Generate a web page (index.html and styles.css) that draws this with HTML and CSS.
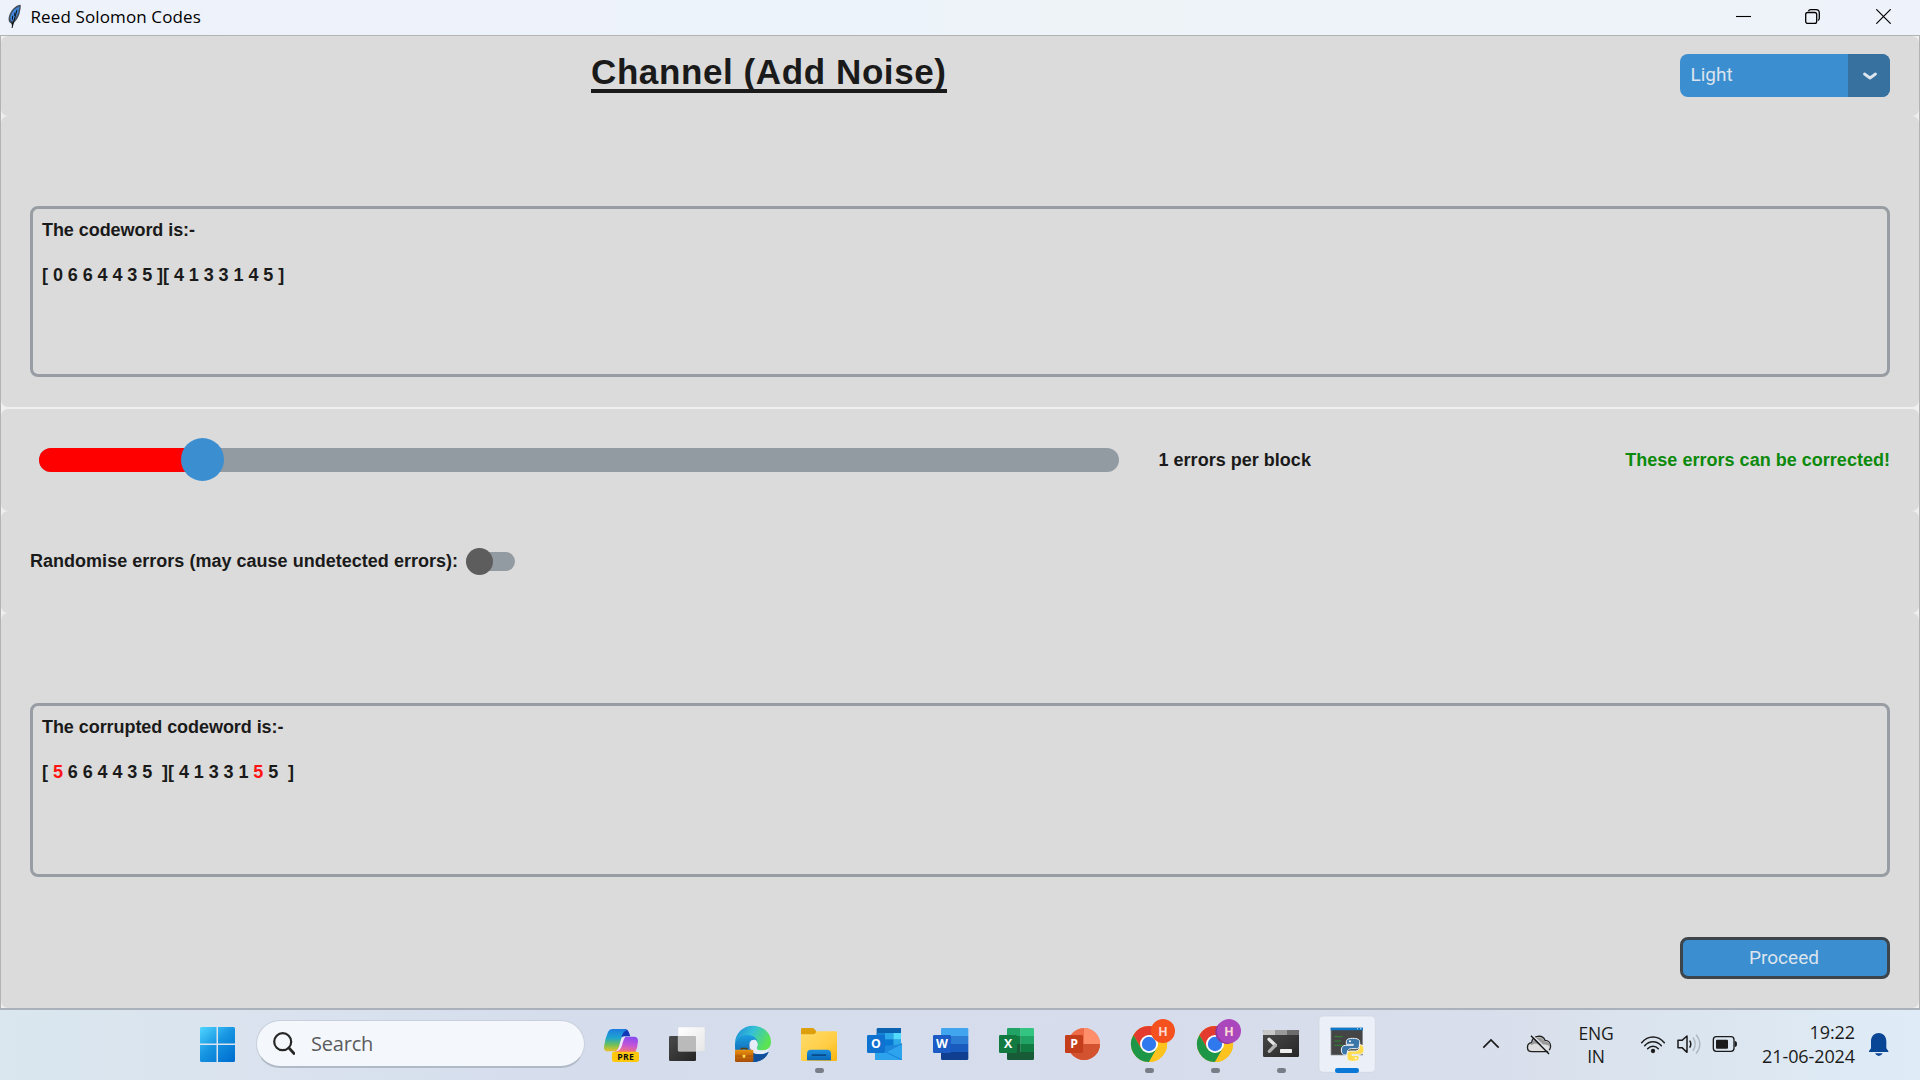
FILE: index.html
```html
<!DOCTYPE html>
<html lang="en">
<head>
<meta charset="utf-8">
<title>Reed Solomon Codes</title>
<link rel="stylesheet" href="styles.css">
</head>
<body>
<div class="desktop">
  <header class="titlebar">
    <svg class="feather" viewBox="20 10 45 80">
      <path d="M61 15C46 16 30 31 25 53c-2 10 2 17 10 19 9-4 19-17 23-32 2-9 4-18 3-25z" fill="#42505f"/>
      <path d="M57 20C44 25 33 37 30 53c0 6 2 10 5 12 8-6 15-15 19-27z" fill="#3f86dc"/>
      <path d="M50 30L35 84M44 38l-2 10M37 48l-1 12" stroke="#10151c" stroke-width="3" fill="none"/>
      <path d="M33 66l6 3-3 16z" fill="#111"/>
    </svg>
    <h1 class="app-name">Reed Solomon Codes</h1>
    <div class="window-controls">
      <svg class="control" viewBox="0 0 15 15"><path d="M0 7.500h15" stroke="#000" stroke-width="1.100"/></svg>
      <svg class="control" viewBox="0 0 15 15"><rect x=".7" y="3.500" width="11" height="11" rx="2" fill="none" stroke="#000" stroke-width="1.300"/><path d="M3.500 2.200Q4 .7 5.700 .7H11a3.300 3.300 0 0 1 3.300 3.300v5.200q0 1.800-1.500 2.300" fill="none" stroke="#000" stroke-width="1.300"/></svg>
      <svg class="control" viewBox="0 0 15 15"><path d="M.3.3l14.400 14.400M14.700.3L.3 14.700" stroke="#000" stroke-width="1.200"/></svg>
    </div>
  </header>

  <main class="window">
    <section class="frame frame-head">
      <h2 class="heading">Channel (Add Noise)</h2>
      <div class="theme-menu">
        <span class="theme-value">Light</span>
        <span class="theme-arrow"><svg viewBox="0 0 14 8"><path d="M1.500 2L7 6l5.500-4" fill="none" stroke="#dce4ee" stroke-width="2.800" stroke-linecap="round" stroke-linejoin="round"/></svg></span>
      </div>
    </section>

    <section class="frame frame-codeword">
      <div class="textbox">
        <p class="line">The codeword is:-</p>
        <p class="line">[ 0 6 6 4 4 3 5 ][ 4 1 3 3 1 4 5 ]</p>
      </div>
    </section>

    <section class="frame frame-slider">
      <div class="slider"><div class="slider-fill"></div><div class="slider-knob"></div></div>
      <span class="label label-count">1 errors per block</span>
      <span class="label label-ok">These errors can be corrected!</span>
    </section>

    <section class="frame frame-switch">
      <span class="label">Randomise errors (may cause undetected errors):</span>
      <div class="switch"><div class="switch-knob"></div></div>
    </section>

    <section class="frame frame-result">
      <div class="textbox">
        <p class="line">The corrupted codeword is:-</p>
        <p class="line"><span>[ </span><span class="bad">5</span><span> 6 6 4 4 3 5  ][ 4 1 3 3 1 </span><span class="bad">5</span><span> 5  ]</span></p>
      </div>
      <button class="proceed">Proceed</button>
    </section>
  </main>

  <footer class="taskbar">
    <svg class="start" viewBox="0 0 35 35">
      <defs><linearGradient id="win" gradientUnits="userSpaceOnUse" x1="0" y1="0" x2="30" y2="35"><stop offset="0" stop-color="#4fd6ff"/><stop offset=".5" stop-color="#1795e2"/><stop offset="1" stop-color="#0070d0"/></linearGradient></defs>
      <path fill="url(#win)" d="M1.500 0H16.500V16.500H0V1.500Q0 0 1.500 0zM18 0h15.500Q35 0 35 1.500v15H18zM0 18h16.500v17h-15Q0 35 0 33.500zM18 18h17v15.500q0 1.500-1.500 1.500H18z"/>
    </svg>
    <div class="search">
      <svg class="search-icon" viewBox="0 0 22 23"><circle cx="9.700" cy="9.700" r="8.500" fill="none" stroke="#262626" stroke-width="2.200"/><path d="M16 16l5 5.500" stroke="#262626" stroke-width="2.700" stroke-linecap="round"/></svg>
      <span class="search-text">Search</span>
    </div>
    <div class="apps">
      <svg class="app" viewBox="-3 30 198 210">
        <defs>
          <linearGradient id="cpA" x1="0" y1="0" x2="0" y2="1"><stop offset="0" stop-color="#1d7be0"/><stop offset=".4" stop-color="#1ea5d0"/><stop offset=".7" stop-color="#6cc05a"/><stop offset="1" stop-color="#ecc222"/></linearGradient>
          <linearGradient id="cpB" x1="0.600" y1="0" x2=".4" y2="1"><stop offset="0" stop-color="#8a4cf0"/><stop offset=".5" stop-color="#c355d8"/><stop offset="1" stop-color="#fb7a6c"/></linearGradient>
        </defs>
        <path d="M97 87h8q8 0 11 8l5 14h-16q-12 0-18 12z" fill="#1238b8"/>
        <path d="M66 87h36q9 0 6 5c-8 2-10 8-14 22l-7 26q-4 14-16 14H54q-13 0-12-14 3-24 12-44 4-9 12-9z" fill="url(#cpA)"/>
        <path d="M106 110h26q13 0 12 14-1 18-8 33H62q18 0 24-14l9-23q3-8 11-10z" fill="url(#cpB)"/>
        <path d="M106 110c-11 2-12 8-17 24-4 13-7 18-13 20 13 1 18-10 21-22 3-11 5-16 9-22z" fill="#f0e6f8"/>
        <rect x="66" y="155" width="81" height="31" rx="7" fill="#ffc80a"/>
        <text x="107" y="180" class="pre-badge">PRE</text>
      </svg>
      <svg class="app" viewBox="195 30 198 210">
        <defs><linearGradient id="tv" x1="0" y1="0" x2="1" y2="1"><stop offset="0" stop-color="#4a4a4a"/><stop offset="1" stop-color="#242424"/></linearGradient><linearGradient id="tw" x1="0" y1="0" x2="1" y2="1"><stop offset="0" stop-color="#fff"/><stop offset="1" stop-color="#e6e6e6"/></linearGradient></defs>
        <rect x="237" y="108" width="81" height="75" rx="4" fill="url(#tv)"/>
        <rect x="264" y="81" width="81" height="73" rx="4" fill="url(#tw)" stroke="#d2d5da"/>
        <path d="M264 108h50q4 0 4 4v42h-50q-4 0-4-4z" fill="#bababa"/>
      </svg>
      <svg class="app" viewBox="393 30 198 210">
        <defs>
          <linearGradient id="edA" x1="0" y1="0" x2="1" y2=".4"><stop offset="0" stop-color="#1a86d6"/><stop offset=".5" stop-color="#35c0d8"/><stop offset="1" stop-color="#5be354"/></linearGradient>
          <linearGradient id="edB" x1="0" y1="0" x2="0" y2="1"><stop offset="0" stop-color="#1c9fe0"/><stop offset="1" stop-color="#0b4fa0"/></linearGradient>
          <linearGradient id="case" x1="0" y1="0" x2="0" y2="1"><stop offset="0" stop-color="#ea9310"/><stop offset=".5" stop-color="#c76a08"/><stop offset="1" stop-color="#a54e08"/></linearGradient>
        </defs>
        <path d="M435 130c0-30 24-53 54-53s54 22 54 49c0 17-13 26-27 26-11 0-17-3-15-10 7-10-1-22-14-22-20 0-34 8-52 30z" fill="url(#edA)"/>
        <path d="M435 134c4-20 22-30 39-29 16 1 25 9 28 19-6-8-17-6-22 2-8 14-1 34 22 36 12 2 24-1 34-6-8 18-24 30-47 30-32 0-56-22-54-52z" fill="url(#edB)"/>
        <path d="M480 130c-6 16 4 33 24 33 14 0 25-3 32-8-8 20-26 31-47 31z" fill="#11519b"/>
        <path d="M482 125c3-6 14-8 18-1 4 8 1 14-1 20 0 8 22 9 38 3-4 12-17 16-30 15-24-1-33-20-25-37z" fill="#e6ecf8"/>
        <path d="M454 150v-5h16v5" fill="none" stroke="#5a3a10" stroke-width="4"/>
        <rect x="435" y="149" width="55" height="37" rx="4" fill="url(#case)"/>
        <path d="M435 168h55" stroke="#8c4506" stroke-width="1.500"/><rect x="458" y="164" width="8" height="9" rx="2" fill="#ffd94a"/>
      </svg>
      <svg class="app" viewBox="591 30 198 210">
        <defs><linearGradient id="fo" x1="0" y1="0" x2="1" y2="1"><stop offset="0" stop-color="#ffdc6b"/><stop offset=".6" stop-color="#ffcd44"/><stop offset="1" stop-color="#f9b50a"/></linearGradient><linearGradient id="fb" x1="0" y1="0" x2="0" y2="1"><stop offset="0" stop-color="#1d8fdf"/><stop offset="1" stop-color="#0a68b8"/></linearGradient></defs>
        <path d="M633 88q0-4 4-4h30q4 0 6 3l6 7v16h-46z" fill="#dd9f0c"/>
        <path d="M633 103h37q4 0 6-3l4-6h57q4 0 4 4v81q0 4-4 4H637q-4 0-4-4z" fill="url(#fo)"/>
        <path d="M651 181v-20q0-12 12-12h48q12 0 12 12v20z" fill="url(#fb)"/><rect x="665" y="163" width="44" height="5" rx="2" fill="#084b8a"/>
        <rect x="675" y="204" width="27" height="15" rx="7" fill="#797d87"/>
      </svg>
      <svg class="app" viewBox="9 30 198 210">
        <path d="M84 84h69v55H80V88q0-4 4-4z" fill="#0a62b0"/>
        <path d="M80 99h25v20H80z" fill="#1384d8"/><path d="M105 99h25v20h-25z" fill="#2aa8ea"/><path d="M130 99h23v20h-23z" fill="#54dafc"/>
        <path d="M105 119h25v20h-25z" fill="#0878d4"/><path d="M130 119h23v20h-23z" fill="#2ba9ea"/>
        <path d="M105 138l14 14 37-22v9l-30 22H76v-23z" fill="#0d4a80"/>
        <path d="M156 133v46q0 1-4 1H79q-4 0-4-4v-36z" fill="#1c88dc"/>
        <path d="M156 133v45l-45-22zM75 142l77 38H79q-4 0-4-4z" fill="#2da3ee"/>
        <rect x="51" y="105" width="54" height="54" rx="4" fill="#0f72d0"/><text x="77.500" y="145" class="tile-letter">O</text>
      </svg>
      <svg class="app" viewBox="207 30 198 210">
        <path d="M277 84h74q4 0 4 4v20h-82V88q0-4 4-4z" fill="#41a4ef"/><path d="M273 108h82v24h-82z" fill="#2b7cd3"/><path d="M273 132h82v24h-82z" fill="#185abd"/><path d="M273 156h82v20q0 4-4 4h-74q-4 0-4-4z" fill="#103f91"/>
        <rect x="249" y="105" width="54" height="54" rx="4" fill="#1c5bc4"/><text x="276" y="145" class="tile-letter">W</text>
      </svg>
      <svg class="app" viewBox="405 30 198 210">
        <path d="M475 84h37v24h-41V88q0-4 4-4z" fill="#21a366"/><path d="M512 84h36q4 0 4 4v20h-40z" fill="#33c481"/><path d="M471 108h41v24h-41z" fill="#107c41"/><path d="M512 108h40v24h-40z" fill="#21a366"/><path d="M471 132h41v24h-41z" fill="#185c37"/><path d="M512 132h40v24h-40z" fill="#107c41"/><path d="M471 156h81v20q0 4-4 4h-73q-4 0-4-4z" fill="#185c37"/>
        <rect x="447" y="105" width="54" height="54" rx="4" fill="#127a40"/><text x="474" y="145" class="tile-letter">X</text>
      </svg>
      <svg class="app" viewBox="603 30 198 210">
        <circle cx="702" cy="132" r="48" fill="#ed6c47"/><path d="M702 84a48 48 0 0 1 48 48h-48z" fill="#ff8f6b"/><path d="M654 132h96a48 48 0 0 1-96 0z" fill="#d35230"/>
        <rect x="645" y="105" width="54" height="54" rx="4" fill="#c43e1c"/><text x="672" y="145" class="tile-letter">P</text>
      </svg>
      <svg class="app" viewBox="21 30 198 210">
        <g id="chrome"><circle cx="117" cy="132" r="54" fill="#fbbc04"/>
        <path d="M70.200 105A54 54 0 0 1 163.800 105H117L93.600 145.500z" fill="#e33b2e"/>
        <path d="M70.200 105A54 54 0 0 0 117 186l23.400-40.500H93.600z" fill="#1e9648"/>
        <path d="M163.800 105A54 54 0 0 1 117 186l23.400-40.500L117 105z" fill="#fcc31e"/>
        <circle cx="117" cy="132" r="27" fill="#fff"/><circle cx="117" cy="132" r="21.500" fill="#2f78ee"/>
        <rect x="105" y="204" width="27" height="15" rx="7" fill="#797d87"/></g>
        <circle cx="159" cy="93" r="36" fill="#f4511e"/><text x="159" y="107" class="badge-letter">H</text>
      </svg>
      <svg class="app" viewBox="219 30 198 210">
        <use href="#chrome" x="198"/>
        <circle cx="351" cy="97" r="35" fill="#8e379f"/><circle cx="357" cy="93" r="36" fill="#ab47bc"/><text x="357" y="107" class="badge-letter">H</text>
      </svg>
      <svg class="app" viewBox="417 30 198 210">
        <defs><linearGradient id="te" x1="0" y1="0" x2="1" y2="1"><stop offset="0" stop-color="#4a4a4a"/><stop offset="1" stop-color="#272727"/></linearGradient></defs>
        <rect x="459" y="90" width="108" height="81" rx="4" fill="url(#te)"/><path d="M463 90h32v15h-36V94q0-4 4-4z" fill="#c8c8c8"/><path d="M495 90h36v15h-36z" fill="#9a9a9a"/><path d="M531 90h32q4 0 4 4v11h-36z" fill="#6c6c6c"/>
        <path d="M477 118l19 18" stroke="#e4e4e4" stroke-width="10" stroke-linecap="round"/><path d="M496 136l-18 18" stroke="#b2b2b2" stroke-width="10" stroke-linecap="round"/><rect x="510" y="147" width="36" height="12" rx="2" fill="#ededed"/>
        <rect x="501" y="204" width="27" height="15" rx="7" fill="#797d87"/>
      </svg>
      <svg class="app" viewBox="615 30 198 210">
        <rect x="627" y="48" width="169" height="169" rx="12" fill="#ebeff7" stroke="#cdd3df" stroke-width="2"/>
        <rect x="663" y="84" width="95" height="81" fill="#454545" stroke="#8d9298" stroke-width="2"/><path d="M662 83h97v8h-97z" fill="#0d79cc"/><path d="M741 85h3v3h-3zM750 85h4v3h-4z" fill="#e8f3fb"/>
        <path d="M673 110h25M673 123h20M673 136h26" stroke="#2f8a34" stroke-width="3"/>
        <g stroke="#f2f4f8" stroke-width="3" stroke-linejoin="round">
        <path d="M728 115c-18 0-19 6-19 11v7h21v3h-24c-7 0-12 5-12 14 0 10 5 15 11 15h7v-8c0-7 5-11 12-11h15c6 0 10-4 10-10v-11c0-6-6-10-21-10z" fill="#3a76a8"/>
        <path d="M728 184c18 0 19-6 19-11v-7h-21v-3h24c7 0 12-5 12-14 0-10-5-15-11-15h-3v8c0 7-5 11-12 11h-15c-6 0-10 4-10 10v11c0 6 6 10 17 10z" fill="#ffdc4e"/>
        </g>
        <circle cx="720" cy="124" r="3" fill="#fff"/><circle cx="737" cy="175" r="3" fill="#fff"/>
        <rect x="675" y="204" width="72" height="15" rx="7" fill="#0a78d6"/>
      </svg>
    </div>
    <div class="tray">
      <svg class="chevron" viewBox="66 114 54 36"><path d="M70 143l23-23 23 23" fill="none" stroke="#1b1b1b" stroke-width="5"/></svg>
      <svg class="cloud" viewBox="198 102 78 63"><path d="M216 155c-18 0-18-25-1-27 2-22 33-26 40-7 22 0 22 34 2 34z" fill="#ddd" stroke="#222" stroke-width="4"/><path d="M218 128c3-18 29-21 35-4 12 0 18 8 17 15-12-7-22-6-29-2-8-7-20-7-25-2-5-1-6-5 2-7z" fill="#999"/><path d="M217 106l52 49" stroke="#dfe5ee" stroke-width="4"/><path d="M213 107l54 55" stroke="#111" stroke-width="4"/></svg>
      <div class="lang"><span>ENG</span><span>IN</span></div>
      <svg class="wifi" viewBox="540 99 78 63"><g fill="none" stroke="#1b1b1b" stroke-width="4.500" stroke-linecap="round"><path d="M545 125c19-23 49-23 68 0M554 134c14-16 36-16 50 0M563 143c9-10 23-10 32 0"/></g><circle cx="579" cy="150" r="6.500" fill="#1b1b1b"/></svg>
      <svg class="volume" viewBox="648 99 78 66"><path d="M654 121h12l15-13v49l-15-14h-12z" fill="none" stroke="#1b1b1b" stroke-width="4.500" stroke-linejoin="round"/><path d="M689 122q7 10 0 21" fill="none" stroke="#1b1b1b" stroke-width="4.500"/><path d="M699 112q13 20 0 41M708 104q23 29 0 57" fill="none" stroke="#adb5bf" stroke-width="4"/></svg>
      <svg class="battery" viewBox="756 105 78 54"><rect x="760" y="110" width="62" height="44" rx="9" fill="none" stroke="#1b1b1b" stroke-width="4"/><rect x="768" y="119" width="36" height="27" rx="3" fill="#1b1b1b"/><path d="M824 123q7 0 7 9t-7 9z" fill="#1b1b1b"/></svg>
      <div class="clock"><span>19:22</span><span>21-06-2024</span></div>
      <svg class="bell" viewBox="1222 96 63 75"><path d="M1231 145v-21c0-33 46-33 46 0v21l6 8v3h-58v-3z" fill="#0a4696"/><path d="M1243 160h23q-4 8-11.500 8t-11.500-8z" fill="#0a4696"/></svg>
    </div>
  </footer>
</div>
</body>
</html>
```
FILE: styles.css
```css
* { box-sizing: border-box; margin: 0; }
body { width: 1920px; height: 1080px; overflow: hidden; font-family: "Liberation Sans", Arial, sans-serif; color: #1a1a1a; }
svg { display: block; flex: none; }
.desktop { width: 1920px; height: 1080px; display: flex; flex-direction: column; }

.titlebar { height: 35px; display: flex; align-items: center; padding: 0 29px 2px 7px; background: linear-gradient(90deg, #eef2fa 0%, #edf3fb 45%, #eef3f8 55%, #eef3fb 100%); }
.feather { width: 15px; height: 27px; }
.app-name { margin-left: 8.500px; padding-top: 1px; font: 400 17px/24px "Open Sans", "Noto Sans", sans-serif; letter-spacing: .12px; color: #000; }
.window-controls { margin-left: auto; display: flex; gap: 55px; }
.control { width: 15px; height: 15px; }
.control:first-child { margin-right: -1px; }
.control:last-child { margin-left: 1px; }

.window { height: 975px; display: flex; flex-direction: column; background: #efefef; border: 1px solid #b3b3b3; border-bottom: 2px solid #aab1ba; }
.frame { background: #dbdbdb; border-radius: 7px; flex: none; }
.frame-head { height: 80px; display: flex; justify-content: space-between; align-items: flex-start; padding: 18px 29px 0 590px; }
.heading { height: 40px; margin-top: -1px; border-bottom: 4.500px solid #1a1a1a; font-size: 35px; line-height: 38px; letter-spacing: .6px; white-space: nowrap; }
.theme-menu { width: 210px; height: 43px; display: flex; border-radius: 8px; overflow: hidden; background: #3b8ed0; color: #dce4ee; }
.theme-value { flex: 1; padding-left: 10.500px; font: 19px/42px Roboto, sans-serif; }
.theme-arrow { width: 42px; background: #36719f; display: flex; align-items: center; justify-content: center; }
.theme-arrow svg { width: 14px; height: 8px; margin: 1px 0 0 1px; }

.frame-codeword { height: 291px; padding: 90px 29px 0; }
.textbox { height: 171px; padding: 10px 9px; display: flex; flex-direction: column; gap: 22.500px; border: 3px solid #979da2; border-radius: 8px; font-size: 18px; font-weight: 700; line-height: 22.500px; letter-spacing: -.06px; }
.line { white-space: pre; }
.bad { color: #ff1414; }

.frame-slider { height: 102px; margin-top: 2px; display: flex; align-items: center; padding: 0 29px 1px 38px; }
.slider { position: relative; width: 1080px; height: 24px; border-radius: 12px; background: #939ba2; }
.slider-fill { width: 163px; height: 24px; border-radius: 12px 0 0 12px; background: #f00; }
.slider-knob { position: absolute; left: 141.500px; top: -9.500px; width: 43px; height: 43px; border-radius: 50%; background: #3b8ed0; }
.label { font-size: 18px; font-weight: 700; line-height: 22px; letter-spacing: .02px; white-space: nowrap; }
.label-count { margin-left: 39.500px; }
.label-ok { margin-left: auto; color: #0c8a0c; }

.frame-switch { height: 102px; display: flex; align-items: center; padding: 0 0 2px 29px; }
.switch { position: relative; width: 49px; height: 19px; margin-left: 7.500px; border-radius: 10px; background: #939ba2; }
.switch-knob { position: absolute; left: 0; top: -4px; width: 27px; height: 27px; border-radius: 50%; background: #5d5d5d; }

.frame-result { height: 395px; padding: 90px 29px 0; display: flex; flex-direction: column; }
.frame-result .textbox { height: 174px; }
.proceed { align-self: flex-end; width: 210px; height: 42px; margin-top: 60px; padding: 0 2px 2px 0; border: 3px solid #3e454a; border-radius: 8px; background: #3b8ed0; color: #dce4ee; font: 19px Roboto, sans-serif; }

.taskbar { height: 70px; display: flex; align-items: flex-start; padding-left: 200px; background: linear-gradient(90deg, #dae7ef 0%, #dae3ee 12%, #d5dded 30%, #d6dceb 60%, #d8deeb 76%, #dbe5ef 88%, #dfecf7 100%); font-family: "Open Sans", "Noto Sans", sans-serif; }
.start { width: 35px; height: 35px; margin-top: 17px; }
.search { width: 329px; height: 48px; margin: 10px 4px 0 21px; padding-left: 16px; display: flex; align-items: center; border: 1px solid #c8d0dc; border-bottom: 2px solid #b0bac6; border-radius: 24px; background: #f4f7fb; }
.search-icon { width: 22px; height: 23px; }
.search-text { margin-left: 16px; padding-top: 1px; font-size: 20px; line-height: 26px; letter-spacing: -.2px; color: #5a5c5f; }
.apps { display: flex; }
.app { width: 66px; height: 70px; }
.pre-badge { font: 700 26px "Open Sans", sans-serif; letter-spacing: 1px; text-anchor: middle; fill: #111; }
.tile-letter { font: 700 37px "Open Sans", sans-serif; text-anchor: middle; fill: #fff; }
.badge-letter { font: 700 38px Roboto, sans-serif; text-anchor: middle; fill: #fbd9d4; }

.tray { flex: 1; height: 70px; display: flex; align-items: center; padding: 0 31px 2px 101px; color: #1b1b1b; }
.chevron { width: 18px; height: 12px; }
.cloud { width: 26px; height: 21px; margin-left: 26px; }
.lang { width: 40px; margin: 2px 0 0 24px; text-align: center; display: flex; flex-direction: column; font-size: 17.500px; line-height: 23px; letter-spacing: -.2px; }
.wifi { width: 26px; height: 21px; margin-left: 24px; }
.volume { width: 26px; height: 22px; margin-left: 10px; }
.battery { width: 26px; height: 18px; margin-left: 10px; }
.clock { margin-left: auto; display: flex; flex-direction: column; align-items: flex-end; margin-top: -1px; font-size: 18px; line-height: 24px; letter-spacing: -.1px; }
.bell { width: 21px; height: 25px; margin-left: 13px; }
```
